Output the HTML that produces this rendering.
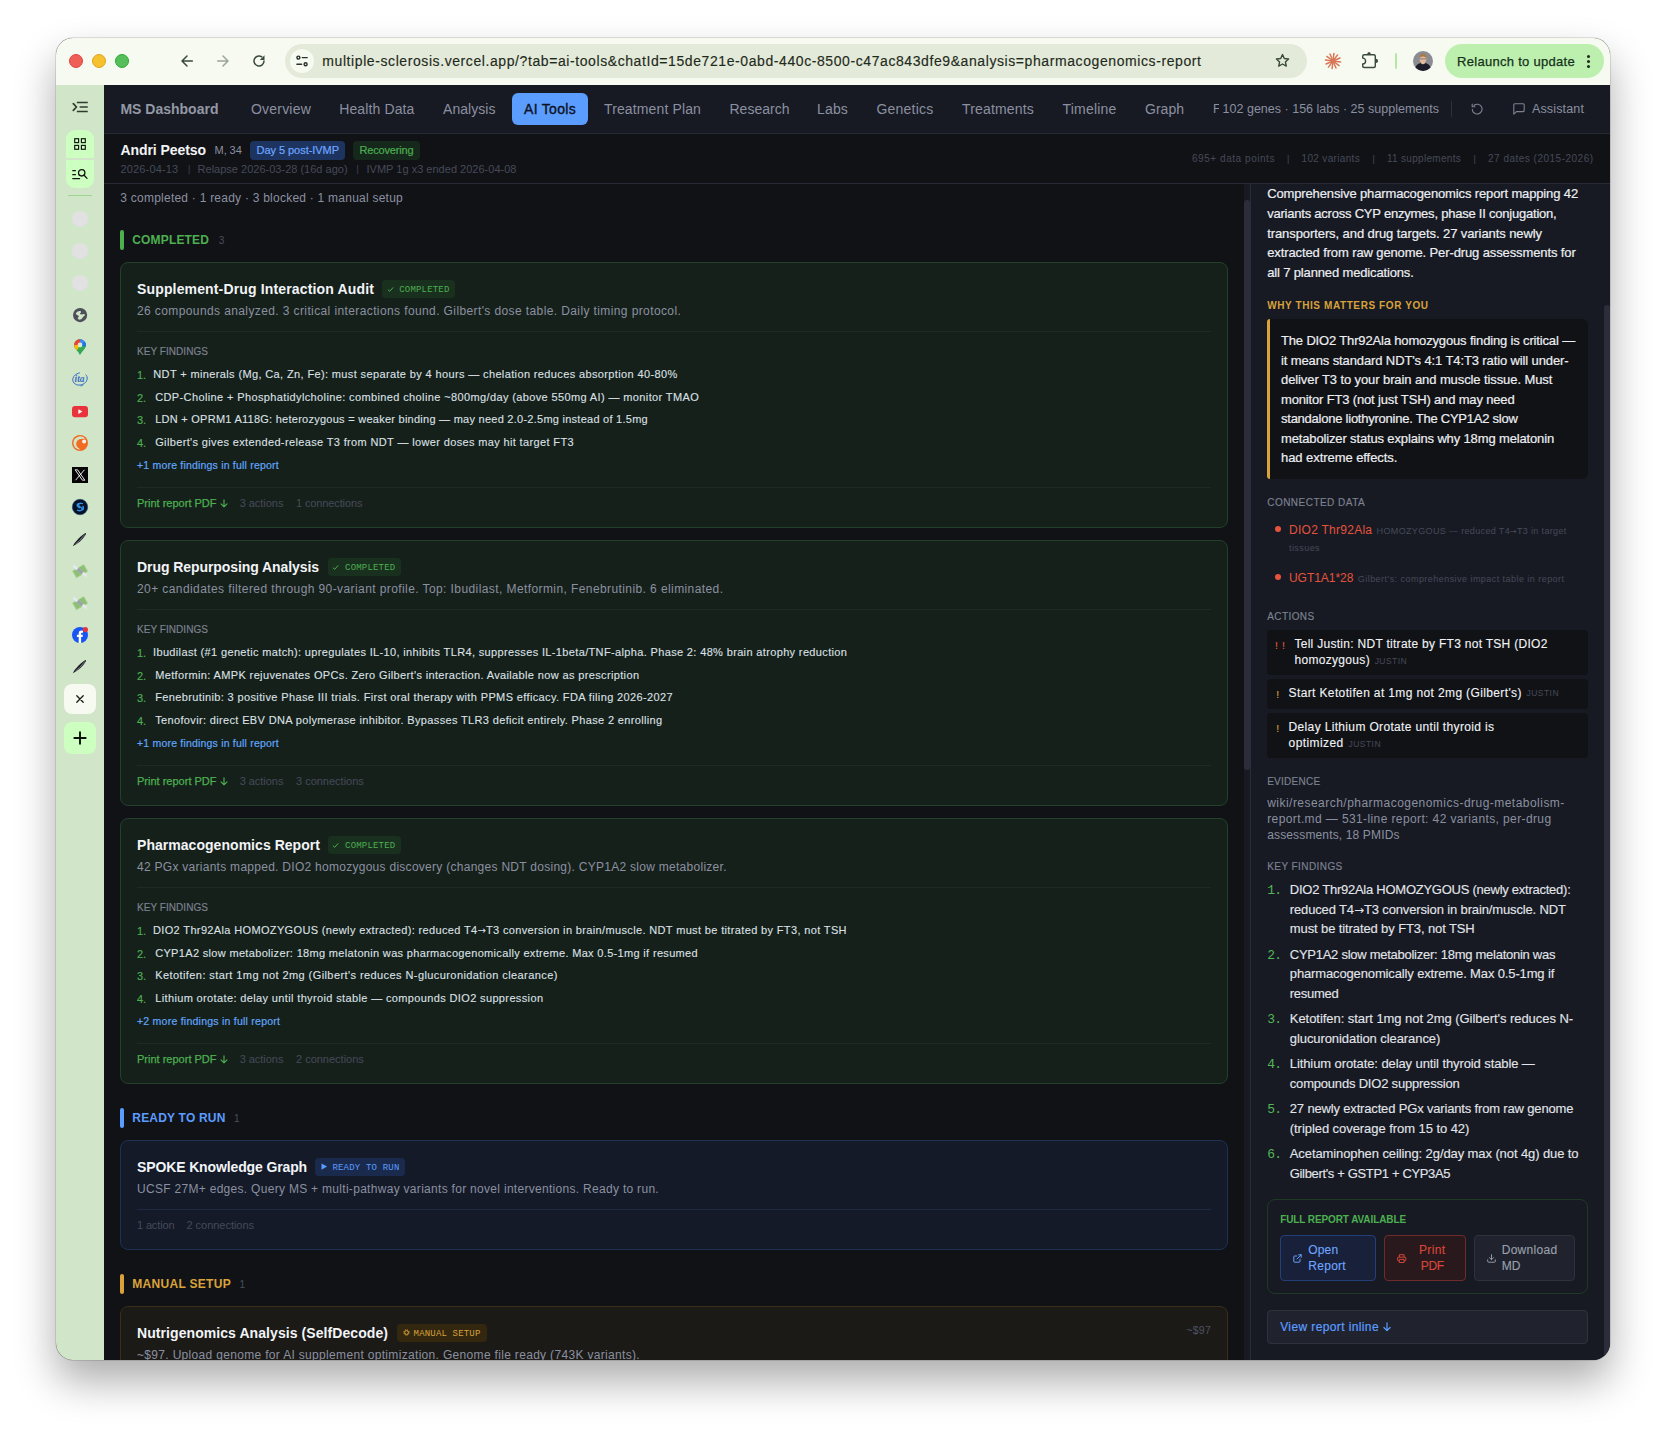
<!DOCTYPE html><html lang="en"><head><meta charset="utf-8"><title>MS Dashboard — AI Tools</title><style>

*{box-sizing:border-box;margin:0;padding:0}
html,body{width:1666px;height:1434px;overflow:hidden;background:#fff}
body{font-family:"Liberation Sans","DejaVu Sans",sans-serif;position:relative;-webkit-font-smoothing:antialiased}
.b{position:absolute}
.t{position:absolute;white-space:pre}
.m{font-family:"Liberation Mono","DejaVu Sans Mono",monospace}
.ar{font-family:"DejaVu Sans",sans-serif;font-size:.92em;line-height:0;letter-spacing:0;-webkit-text-stroke:0}
svg{position:absolute;overflow:visible}
#win{position:absolute;left:56px;top:38px;width:1554px;height:1322px;border-radius:17px;overflow:hidden;background:#111216}
#shadow{position:absolute;left:56px;top:38px;width:1554px;height:1322px;border-radius:17px;box-shadow:0 0 0 0.5px rgba(0,0,0,.22),0 21px 42px rgba(0,0,0,.33)}
#canvas{position:absolute;left:-56px;top:-38px;width:1666px;height:1434px}

</style></head><body>
<div id="shadow"></div><div id="win"><div id="canvas">
<div class="b " style="left:56px;top:38px;width:1554px;height:46.5px;background:#f7faf0;"></div>
<div class="b " style="left:69px;top:54px;width:14px;height:14px;background:#ee5f57;border:0.5px solid #e0443e;border-radius:7px;"></div>
<div class="b " style="left:92px;top:54px;width:14px;height:14px;background:#f5c22f;border:0.5px solid #dea123;border-radius:7px;"></div>
<div class="b " style="left:115px;top:54px;width:14px;height:14px;background:#56bf5b;border:0.5px solid #2bab33;border-radius:7px;"></div>
<div class="b " style="left:285px;top:44px;width:1021.6px;height:34px;background:#e3ead9;border-radius:17px;"></div>
<div class="b " style="left:290px;top:49px;width:24px;height:24px;background:#f7faf0;border-radius:12px;"></div>
<div class="b " style="left:1445px;top:44px;width:159px;height:34px;background:#bdf0ae;border-radius:17px;"></div>
<div class="b " style="left:1395px;top:53.3px;width:2px;height:15.4px;background:#b4e9a3;border-radius:1px;"></div>
<div class="b " style="left:56px;top:84.5px;width:48px;height:1275.5px;background:#d1e5c9;"></div>
<div class="b " style="left:104px;top:85px;width:1506px;height:48px;background:#171a23;"></div>
<div class="b " style="left:104px;top:133px;width:1506px;height:1px;background:#262a35;"></div>
<div class="b " style="left:104px;top:134px;width:1506px;height:49px;background:#111216;"></div>
<div class="b " style="left:104px;top:183px;width:1506px;height:1px;background:#262a35;"></div>
<div class="b " style="left:512px;top:93px;width:76px;height:32px;background:#5b9cff;border-radius:6px;"></div>
<div class="b " style="left:1451px;top:100.5px;width:1px;height:16.5px;background:#2d313d;"></div>
<div class="b " style="left:250px;top:141px;width:95px;height:19px;background:#1d3460;border-radius:4px;"></div>
<div class="b " style="left:353px;top:141px;width:67px;height:19px;background:#15281b;border-radius:4px;"></div>
<div class="b " style="left:1244px;top:184px;width:6px;height:1176px;background:#171a23;"></div>
<div class="b " style="left:1244px;top:200px;width:6px;height:570px;background:#2b2e3a;border-radius:3px;"></div>
<div class="b " style="left:120px;top:230px;width:4px;height:20px;background:#4caf50;border-radius:2px;"></div>
<div class="b " style="left:120px;top:262px;width:1108px;height:265.6px;background:#16201b;border:1px solid #22402a;border-radius:8px;"></div>
<div class="b " style="left:382px;top:280px;width:73px;height:18px;background:#1a301f;border-radius:4px;"></div>
<svg style="left:386.5px;top:285.6px" width="7" height="7" viewBox="0 0 7 7"><path d="M1.2 3.9 L2.7 5.3 L5.9 1.7" fill="none" stroke="#4caf50" stroke-width="1" stroke-linecap="round" stroke-linejoin="round"/></svg>
<div class="b " style="left:137px;top:331px;width:1074px;height:1px;background:#1d2c22;"></div>
<div class="b " style="left:137px;top:487px;width:1074px;height:1px;background:#1d2c22;"></div>
<svg style="left:219.5px;top:499.2px" width="8" height="9" viewBox="0 0 8 9"><path d="M4 0.8 V7.8 M1 4.9 L4 7.9 L7 4.9" fill="none" stroke="#4caf50" stroke-width="1.15" stroke-linecap="round" stroke-linejoin="round"/></svg>
<div class="b " style="left:120px;top:540.4px;width:1108px;height:265.20000000000005px;background:#16201b;border:1px solid #22402a;border-radius:8px;"></div>
<div class="b " style="left:327.8px;top:558.0px;width:73px;height:18px;background:#1a301f;border-radius:4px;"></div>
<svg style="left:332.3px;top:563.6px" width="7" height="7" viewBox="0 0 7 7"><path d="M1.2 3.9 L2.7 5.3 L5.9 1.7" fill="none" stroke="#4caf50" stroke-width="1" stroke-linecap="round" stroke-linejoin="round"/></svg>
<div class="b " style="left:137px;top:609.0px;width:1074px;height:1px;background:#1d2c22;"></div>
<div class="b " style="left:137px;top:765.0px;width:1074px;height:1px;background:#1d2c22;"></div>
<svg style="left:219.5px;top:777.2px" width="8" height="9" viewBox="0 0 8 9"><path d="M4 0.8 V7.8 M1 4.9 L4 7.9 L7 4.9" fill="none" stroke="#4caf50" stroke-width="1.15" stroke-linecap="round" stroke-linejoin="round"/></svg>
<div class="b " style="left:120px;top:818.3px;width:1108px;height:265.5px;background:#16201b;border:1px solid #22402a;border-radius:8px;"></div>
<div class="b " style="left:327.8px;top:836.0px;width:73px;height:18px;background:#1a301f;border-radius:4px;"></div>
<svg style="left:332.3px;top:841.6px" width="7" height="7" viewBox="0 0 7 7"><path d="M1.2 3.9 L2.7 5.3 L5.9 1.7" fill="none" stroke="#4caf50" stroke-width="1" stroke-linecap="round" stroke-linejoin="round"/></svg>
<div class="b " style="left:137px;top:887.0px;width:1074px;height:1px;background:#1d2c22;"></div>
<div class="b " style="left:137px;top:1043.0px;width:1074px;height:1px;background:#1d2c22;"></div>
<svg style="left:219.5px;top:1055.2px" width="8" height="9" viewBox="0 0 8 9"><path d="M4 0.8 V7.8 M1 4.9 L4 7.9 L7 4.9" fill="none" stroke="#4caf50" stroke-width="1.15" stroke-linecap="round" stroke-linejoin="round"/></svg>
<div class="b " style="left:120px;top:1108px;width:4px;height:20px;background:#5b9cff;border-radius:2px;"></div>
<div class="b " style="left:120px;top:1140px;width:1108px;height:109.8px;background:#141a28;border:1px solid #1d3153;border-radius:8px;"></div>
<div class="b " style="left:315px;top:1158px;width:90px;height:18px;background:#1a2a4d;border-radius:4px;"></div>
<svg style="left:321px;top:1163.4px" width="6.5" height="7.2" viewBox="0 0 6.5 7.2"><path d="M0.5 0.4 L6.1 3.6 L0.5 6.8 Z" fill="#5b9cff"/></svg>
<div class="b " style="left:137px;top:1208.8px;width:1074px;height:1px;background:#1c2a44;"></div>
<div class="b " style="left:120px;top:1274px;width:4px;height:20px;background:#d9a23b;border-radius:2px;"></div>
<div class="b " style="left:120px;top:1306px;width:1108px;height:80px;background:#1b1a17;border:1px solid #3b2e18;border-radius:8px;"></div>
<div class="b " style="left:397px;top:1323.7px;width:89.5px;height:18px;background:#33270f;border-radius:4px;"></div>
<svg style="left:402.6px;top:1329.4px" width="7" height="7" viewBox="0 0 7 7"><circle cx="3.5" cy="3.5" r="2.7" fill="none" stroke="#d9a23b" stroke-width="1" stroke-dasharray="1.1 1.02"/><circle cx="3.5" cy="3.5" r="1.9" fill="none" stroke="#d9a23b" stroke-width="1"/></svg>
<div class="b " style="left:1250px;top:184px;width:360px;height:1176px;background:#171a23;"></div>
<div class="b " style="left:1250px;top:184px;width:1px;height:1176px;background:#2a2d39;"></div>
<div class="b " style="left:1604px;top:305px;width:6px;height:1100px;background:#2b2e3a;border-radius:3px;"></div>
<div class="b " style="left:1267.2px;top:318.8px;width:320.5px;height:160.2px;background:#111216;border-radius:3px 6px 6px 3px;"></div>
<div class="b " style="left:1267.2px;top:318.8px;width:3px;height:160.2px;background:#d9a23b;border-radius:3px 0 0 3px;"></div>
<div class="b " style="left:1275px;top:526.3px;width:6px;height:6px;background:#e5533d;border-radius:3px;"></div>
<div class="b " style="left:1275px;top:574.3px;width:6px;height:6px;background:#e5533d;border-radius:3px;"></div>
<div class="b " style="left:1267.2px;top:630px;width:320.8px;height:44.8px;background:#111216;border-radius:4px;"></div>
<div class="b " style="left:1267.2px;top:679.3px;width:320.8px;height:29.5px;background:#111216;border-radius:4px;"></div>
<div class="b " style="left:1267.2px;top:713.3px;width:320.8px;height:44.5px;background:#111216;border-radius:4px;"></div>
<div class="b " style="left:1267.2px;top:1199.2px;width:320.6px;height:94.4px;border:1px solid #1e3a25;border-radius:8px;"></div>
<div class="b " style="left:1280px;top:1235.2px;width:95.8px;height:45.6px;background:#19203a;border:1px solid #233f78;border-radius:4px;"></div>
<div class="b " style="left:1384.1px;top:1235.2px;width:81.7px;height:45.6px;background:#2a191c;border:1px solid #6e2b29;border-radius:4px;"></div>
<div class="b " style="left:1474.2px;top:1235.2px;width:100.5px;height:45.6px;background:#20232d;border:1px solid #2f323d;border-radius:4px;"></div>
<div class="b " style="left:1267.2px;top:1310px;width:320.6px;height:34.2px;background:#20232d;border:1px solid #2f323d;border-radius:4px;"></div>
<svg style="left:1382.5px;top:1322.2px" width="8" height="10" viewBox="0 0 8 10"><path d="M4 0.8 V8.6 M0.9 5.5 L4 8.7 L7.1 5.5" fill="none" stroke="#5b9cff" stroke-width="1.2" stroke-linecap="round" stroke-linejoin="round"/></svg>
<svg style="left:181px;top:55px" width="12" height="12" viewBox="0 0 12 12"><path d="M11.3 6 H1.2 M6 1 L1 6 L6 11" fill="none" stroke="#3b4a3a" stroke-width="1.5" stroke-linecap="round" stroke-linejoin="round"/></svg>
<svg style="left:217px;top:55px" width="12" height="12" viewBox="0 0 12 12"><path d="M0.7 6 H10.8 M6 1 L11 6 L6 11" fill="none" stroke="#9ca59b" stroke-width="1.5" stroke-linecap="round" stroke-linejoin="round"/></svg>
<svg style="left:253px;top:55px" width="12" height="12" viewBox="0 0 12 12"><path d="M11 6 A5 5 0 1 1 8.6 1.75" fill="none" stroke="#3b4a3a" stroke-width="1.5" stroke-linecap="round"/><path d="M11.5 0.3 V5 H6.8 Z" fill="#3b4a3a"/></svg>
<svg style="left:296px;top:55px" width="12" height="12" viewBox="0 0 12 12"><g fill="none" stroke="#27332a" stroke-width="1.4" stroke-linecap="round"><circle cx="2.4" cy="2.6" r="1.5"/><path d="M6.3 2.6 H11.2"/><path d="M0.9 9.3 H5.6"/><circle cx="9.6" cy="9.3" r="1.5"/></g></svg>
<svg style="left:1275px;top:52.7px" width="15" height="15" viewBox="0 0 15 15"><path d="M7.5 1.6 L9.3 5.5 L13.6 6 L10.4 8.9 L11.3 13.1 L7.5 11 L3.7 13.1 L4.6 8.9 L1.4 6 L5.7 5.5 Z" fill="none" stroke="#3b4a3a" stroke-width="1.4" stroke-linejoin="round"/></svg>
<svg style="left:1325px;top:53px" width="16" height="16" viewBox="0 0 16 16"><g stroke="#d97757" stroke-width="1.5" stroke-linecap="round"><path d="M8 8 L15.55 8.91"/><path d="M8 8 L14.08 12.56"/><path d="M8 8 L10.98 14.99"/><path d="M8 8 L7.09 15.55"/><path d="M8 8 L3.44 14.08"/><path d="M8 8 L1.01 10.98"/><path d="M8 8 L0.45 7.09"/><path d="M8 8 L1.92 3.44"/><path d="M8 8 L5.02 1.01"/><path d="M8 8 L8.91 0.45"/><path d="M8 8 L12.56 1.92"/><path d="M8 8 L14.99 5.02"/></g></svg>
<svg style="left:1361px;top:51px" width="18" height="18" viewBox="0 0 18 18"><path d="M3.2 3.7 H12.8 Q14.3 3.7 14.3 5.2 V14.9 Q14.3 16.4 12.8 16.4 H3.2 Q1.7 16.4 1.7 14.9 V12.9 A2.9 2.9 0 0 0 1.7 7.1 V5.2 Q1.7 3.7 3.2 3.7Z" fill="none" stroke="#3b4a3a" stroke-width="1.45" stroke-linejoin="round"/><path d="M6 3.5 Q6.3 0.9 8 0.9 Q9.7 0.9 10 3.5Z M14.5 7.6 Q17.1 7.9 17.1 9.9 Q17.1 11.9 14.5 12.2Z" fill="#3b4a3a"/></svg>
<svg style="left:1413px;top:51px" width="20" height="20" viewBox="0 0 20 20"><defs><clipPath id="av"><circle cx="10" cy="10" r="10"/></clipPath></defs><g clip-path="url(#av)"><rect width="20" height="20" fill="#8a8c92"/><rect x="8.2" y="10" width="3.6" height="4" fill="#e2bb9c"/><path d="M1.6 20 Q1.8 13.4 7.6 12.1 Q10 14.6 12.4 12.1 Q18.2 13.4 18.4 20Z" fill="#1c1c2a"/><ellipse cx="10" cy="8" rx="3.3" ry="4" fill="#e6b998"/><path d="M6.5 7.9 Q6.2 2.7 10 2.7 Q13.8 2.7 13.5 7.9 Q12.8 5.4 10 5.5 Q7.2 5.4 6.5 7.9Z" fill="#a9794a"/><path d="M7.1 7.9 H12.9" stroke="#66668c" stroke-width="0.8"/></g></svg>
<div class="b " style="left:1586.5px;top:54.5px;width:3px;height:3px;background:#1d2a1c;border-radius:2px;"></div>
<div class="b " style="left:1586.5px;top:59.5px;width:3px;height:3px;background:#1d2a1c;border-radius:2px;"></div>
<div class="b " style="left:1586.5px;top:64.5px;width:3px;height:3px;background:#1d2a1c;border-radius:2px;"></div>
<svg style="left:72px;top:101px" width="16" height="12" viewBox="0 0 16 12"><g fill="none" stroke="#2f3d2f" stroke-width="1.5" stroke-linecap="square"><path d="M5.6 1.6 H15"/><path d="M8.4 6 H15"/><path d="M5.6 10.4 H15"/><path d="M1.3 2.7 L4.5 6 L1.3 9.3" stroke-width="1.7" stroke-linecap="round" stroke-linejoin="round"/></g></svg>
<div class="b " style="left:66px;top:129.8px;width:28px;height:28.2px;background:#ccffc0;border-radius:9px 9px 1px 1px;"></div>
<div class="b " style="left:66px;top:160px;width:28px;height:28px;background:#ccffc0;border-radius:1px 1px 9px 9px;"></div>
<svg style="left:74px;top:138px" width="12" height="12" viewBox="0 0 12 12"><g fill="none" stroke="#101510" stroke-width="1.15"><rect x="0.7" y="0.7" width="3.9" height="3.9"/><rect x="7.4" y="0.7" width="3.9" height="3.9"/><rect x="0.7" y="7.4" width="3.9" height="3.9"/><rect x="7.4" y="7.4" width="3.9" height="3.9"/></g></svg>
<svg style="left:72px;top:168px" width="16" height="13" viewBox="0 0 16 13"><g fill="none" stroke="#101510" stroke-width="1.3" stroke-linecap="round"><path d="M0.8 2.7 H3.4 M0.8 6.7 H3.4 M0.8 10.6 H7.6"/><circle cx="9.7" cy="4.8" r="3.2"/><path d="M12.1 7.3 L15 10.4"/></g></svg>
<div class="b " style="left:68px;top:195px;width:24px;height:1px;background:#9fd591;"></div>
<div class="b " style="left:72.3px;top:211.3px;width:15.4px;height:15.4px;background:#e1e1e1;border-radius:8px;"></div>
<div class="b " style="left:72.3px;top:243.3px;width:15.4px;height:15.4px;background:#e1e1e1;border-radius:8px;"></div>
<div class="b " style="left:72.3px;top:275.3px;width:15.4px;height:15.4px;background:#e1e1e1;border-radius:8px;"></div>
<svg style="left:72.9px;top:307.9px" width="14.2" height="14.2" viewBox="0 0 16 16"><circle cx="8" cy="8" r="8" fill="#4d5058"/><path d="M3 6.2 Q4.6 3 8 3.4 Q9.6 3.8 9 5.2 Q8 5.6 7.8 6.6 Q9.2 8 11.2 7 Q13.4 6.4 13.6 8.2 Q12.2 8.8 11 10.6 Q9.8 13 6.6 13.2 Q4.6 12 5.8 10.4 Q7.2 9.4 6.4 8.6 Q4.2 8.2 3 6.2Z" fill="#d1e5c9"/></svg>
<svg style="left:74px;top:339px" width="12" height="16" viewBox="0 0 12 16"><defs><clipPath id="pin"><path d="M6 0.2 C2.7 0.2 0.2 2.7 0.2 5.9 C0.2 9.6 4 11.6 6 15.8 C8 11.6 11.8 9.6 11.8 5.9 C11.8 2.7 9.3 0.2 6 0.2Z"/></clipPath></defs><g clip-path="url(#pin)"><rect width="12" height="16" fill="#34a853"/><path d="M0 0 H6 V6 L0 10Z" fill="#ea4335"/><path d="M6 0 H12 V6 H6Z" fill="#4285f4"/><path d="M0 6 L6 6 L2.5 12 L0 12Z" fill="#fbbc04"/><path d="M6 6 L12 4 V16 H5 Z" fill="#34a853"/><path d="M12 2 V8 L6 6Z" fill="#1a73e8"/></g><circle cx="6" cy="6" r="2.4" fill="#dbe9d4"/></svg>
<svg style="left:72px;top:371px" width="16" height="16" viewBox="0 0 16 16"><g transform="rotate(-18 8 8)"><ellipse cx="8" cy="8" rx="7.4" ry="6" fill="none" stroke="#3a6fc2" stroke-width="0.9" stroke-dasharray="33 6"/></g><path d="M8.4 15 Q10.4 14.8 11.4 13.8" fill="none" stroke="#3a6fc2" stroke-width="0.8"/><text x="2.6" y="10.9" font-family="Liberation Serif,serif" font-style="italic" font-weight="700" font-size="9.4" fill="#3a6fc2">ita</text></svg>
<svg style="left:72px;top:405.5px" width="16" height="11.2" viewBox="0 0 16 11.2"><rect width="16" height="11.2" rx="3" fill="#e8323c"/><path d="M6.4 3.2 L10.4 5.6 L6.4 8Z" fill="#fff"/></svg>
<svg style="left:72px;top:435px" width="16" height="16" viewBox="0 0 16 16"><circle cx="8" cy="8" r="8" fill="#f26b22"/><path d="M1.6 9.2 A6.6 6.6 0 0 1 13.6 4.4 A5.6 5.6 0 1 0 8.6 14.6 A6.6 6.6 0 0 1 1.6 9.2Z" fill="#d1e5c9"/><circle cx="9.1" cy="8.9" r="4.9" fill="#f26b22"/><circle cx="12.1" cy="6.4" r="2" fill="#f2f2ee"/></svg>
<svg style="left:72px;top:467px" width="16" height="16" viewBox="0 0 16 16"><rect width="16" height="16" fill="#050505"/><path d="M3.2 2.8 H5.6 L12.8 13.2 H10.4 Z" fill="none" stroke="#fff" stroke-width="0.9"/><path d="M12.4 2.8 L3.6 13.2" stroke="#fff" stroke-width="0.9"/></svg>
<svg style="left:72px;top:499px" width="16" height="16" viewBox="0 0 16 16"><circle cx="8" cy="8" r="7.7" fill="#071022" stroke="#1f4f8a" stroke-width="0.6"/><path d="M10.4 4.6 Q7 3.4 6.6 6 Q6.6 7.6 9 8.4 Q10.8 9.4 9.6 11 Q8 12.4 5.4 11.2 M7.6 4.4 Q5 4.6 5.2 6.6 Q5.6 8 7.6 8.8 M11 7.4 Q12 9.4 10.8 10.8" fill="none" stroke="#2f8fe8" stroke-width="1.4" stroke-linecap="round"/></svg>
<svg style="left:72px;top:531.9px" width="15" height="15" viewBox="0 0 15 15"><path d="M0.8 14.2 Q2.2 11 6.6 6.6 Q11 2.2 13.6 1 Q14.4 1.4 13.8 2.6 Q12 5.8 8.2 9.2 Q4 12.8 0.8 14.2Z" fill="#1b1c22"/><path d="M3.4 12.2 Q7.6 9.2 12.8 2.4" fill="none" stroke="#9aa0ad" stroke-width="0.7"/></svg>
<svg style="left:72px;top:659.1px" width="15" height="15" viewBox="0 0 15 15"><path d="M0.8 14.2 Q2.2 11 6.6 6.6 Q11 2.2 13.6 1 Q14.4 1.4 13.8 2.6 Q12 5.8 8.2 9.2 Q4 12.8 0.8 14.2Z" fill="#1b1c22"/><path d="M3.4 12.2 Q7.6 9.2 12.8 2.4" fill="none" stroke="#9aa0ad" stroke-width="0.7"/></svg>
<svg style="left:72px;top:563px" width="16" height="16" viewBox="0 0 16 16"><g transform="rotate(-30 8 8)"><rect x="1.6" y="4.4" width="12.8" height="7.6" fill="#8fbf74"/><rect x="1.6" y="4.4" width="12.8" height="7.6" fill="none" stroke="#a7d08c" stroke-width="0.8"/></g><g transform="rotate(38 8 8)"><rect x="-0.6" y="6.6" width="17.2" height="2.8" rx="1.4" fill="#e4e9ec"/><rect x="4.8" y="6.3" width="6.4" height="3.4" fill="#9aa4aa"/></g></svg>
<svg style="left:72px;top:594.6px" width="16" height="16" viewBox="0 0 16 16"><g transform="rotate(-30 8 8)"><rect x="1.6" y="4.4" width="12.8" height="7.6" fill="#8fbf74"/><rect x="1.6" y="4.4" width="12.8" height="7.6" fill="none" stroke="#a7d08c" stroke-width="0.8"/></g><g transform="rotate(38 8 8)"><rect x="-0.6" y="6.6" width="17.2" height="2.8" rx="1.4" fill="#e4e9ec"/><rect x="4.8" y="6.3" width="6.4" height="3.4" fill="#9aa4aa"/></g></svg>
<svg style="left:72px;top:627px" width="16" height="16" viewBox="0 0 16 16"><circle cx="8" cy="8" r="8" fill="#1756f2"/><path d="M6.7 16 V10 H4.9 V7.7 H6.7 V6.4 Q6.7 3.6 9.4 3.6 Q10.3 3.6 11 3.8 V5.8 H10 Q9.1 5.8 9.1 6.8 V7.7 H10.9 L10.6 10 H9.1 V16Z" fill="#fff"/><circle cx="13.4" cy="2.6" r="2.6" fill="#e8323c"/></svg>
<div class="b " style="left:64px;top:684px;width:32px;height:30px;background:#f7faf0;border-radius:8px;"></div>
<svg style="left:76px;top:695px" width="8" height="8" viewBox="0 0 8 8"><path d="M0.8 0.8 L7.2 7.2 M7.2 0.8 L0.8 7.2" stroke="#151a15" stroke-width="1.3" stroke-linecap="round"/></svg>
<div class="b " style="left:64px;top:722px;width:32px;height:32px;background:#ccffc0;border-radius:8px;"></div>
<svg style="left:73px;top:731px" width="14" height="14" viewBox="0 0 14 14"><path d="M7 0.6 V13.4 M0.6 7 H13.4" stroke="#0c100c" stroke-width="1.9"/></svg>
<svg style="left:1470.5px;top:103px" width="12" height="12" viewBox="0 0 12 12"><path d="M1.3 6.2 A4.9 4.9 0 1 0 2.9 2.5" fill="none" stroke="#7d8291" stroke-width="1.1" stroke-linecap="round"/><path d="M1.2 1 V3.8 H4" fill="none" stroke="#7d8291" stroke-width="1.1" stroke-linecap="round" stroke-linejoin="round"/></svg>
<svg style="left:1513px;top:103px" width="12" height="12" viewBox="0 0 12 12"><path d="M1.8 0.8 H10.2 Q11.2 0.8 11.2 1.8 V7.6 Q11.2 8.6 10.2 8.6 H3.4 L0.8 11.2 V1.8 Q0.8 0.8 1.8 0.8Z" fill="none" stroke="#7d8291" stroke-width="1.1" stroke-linejoin="round"/></svg>
<svg style="left:1293.3px;top:1253.6px" width="9" height="9" viewBox="0 0 9 9"><g fill="none" stroke="#6ea6ff" stroke-width="0.95" stroke-linecap="round" stroke-linejoin="round"><path d="M7 5.2 V7.4 Q7 8.2 6.2 8.2 H1.6 Q0.8 8.2 0.8 7.4 V2.8 Q0.8 2 1.6 2 H3.8"/><path d="M5.6 0.8 H8.2 V3.4 M8.2 0.8 L3.9 5.1"/></g></svg>
<svg style="left:1397px;top:1253.6px" width="9.4" height="9.2" viewBox="0 0 9.4 9.2"><g fill="none" stroke="#d8483a" stroke-width="0.95" stroke-linejoin="round"><path d="M2.3 3.2 V0.7 H7.1 V3.2"/><path d="M2.3 6.8 H1.3 Q0.6 6.8 0.6 6.1 V3.9 Q0.6 3.2 1.3 3.2 H8.1 Q8.8 3.2 8.8 3.9 V6.1 Q8.8 6.8 8.1 6.8 H7.1"/><rect x="2.3" y="5.4" width="4.8" height="3.1"/></g></svg>
<svg style="left:1487px;top:1253.6px" width="9" height="9" viewBox="0 0 9 9"><g fill="none" stroke="#9aa0ad" stroke-width="0.95" stroke-linecap="round" stroke-linejoin="round"><path d="M0.7 5.8 V7.4 Q0.7 8.2 1.5 8.2 H7.5 Q8.3 8.2 8.3 7.4 V5.8"/><path d="M4.5 0.7 V5.6 M2.4 3.6 L4.5 5.7 L6.6 3.6"/></g></svg>
<span class="t" id="t0" style="top:52.00px;font-size:14px;line-height:18px;color:#1f2a1c;left:322.30px;letter-spacing:0.585px;-webkit-text-stroke:0.15px currentColor;">multiple-sclerosis.vercel.app/?tab=ai-tools&amp;chatId=15de721e-0abd-440c-8500-c47ac843dfe9&amp;analysis=pharmacogenomics-report</span>
<span class="t" id="t1" style="top:53.01px;font-size:13px;line-height:17px;color:#14301a;left:1457.00px;letter-spacing:0.291px;-webkit-text-stroke:0.25px currentColor;">Relaunch to update</span>
<span class="t" id="t2" style="top:100.01px;font-size:14px;line-height:18px;color:#9398a6;left:120.40px;font-weight:700;letter-spacing:0.007px;">MS Dashboard</span>
<span class="t" id="t3" style="top:100.01px;font-size:14px;line-height:18px;color:#8b90a0;left:251.00px;letter-spacing:0.205px;">Overview</span>
<span class="t" id="t4" style="top:100.01px;font-size:14px;line-height:18px;color:#8b90a0;left:339.20px;letter-spacing:0.124px;">Health Data</span>
<span class="t" id="t5" style="top:100.01px;font-size:14px;line-height:18px;color:#8b90a0;left:443.00px;letter-spacing:0.057px;">Analysis</span>
<span class="t" id="t6" style="top:100.01px;font-size:14px;line-height:18px;color:#8b90a0;left:604.00px;letter-spacing:0.128px;">Treatment Plan</span>
<span class="t" id="t7" style="top:100.01px;font-size:14px;line-height:18px;color:#8b90a0;left:729.50px;letter-spacing:0.010px;">Research</span>
<span class="t" id="t8" style="top:100.01px;font-size:14px;line-height:18px;color:#8b90a0;left:817.00px;letter-spacing:0.160px;">Labs</span>
<span class="t" id="t9" style="top:100.01px;font-size:14px;line-height:18px;color:#8b90a0;left:876.50px;letter-spacing:0.219px;">Genetics</span>
<span class="t" id="t10" style="top:100.01px;font-size:14px;line-height:18px;color:#8b90a0;left:962.00px;letter-spacing:0.172px;">Treatments</span>
<span class="t" id="t11" style="top:100.01px;font-size:14px;line-height:18px;color:#8b90a0;left:1062.50px;letter-spacing:0.201px;">Timeline</span>
<span class="t" id="t12" style="top:100.01px;font-size:14px;line-height:18px;color:#8b90a0;left:1145.00px;letter-spacing:0.016px;">Graph</span>
<span class="t" id="t13" style="top:100.01px;font-size:14px;line-height:18px;color:#0c1220;left:524.00px;letter-spacing:0.307px;-webkit-text-stroke:0.35px currentColor;">AI Tools</span>
<span class="t" id="t14" style="top:101.01px;font-size:12.5px;line-height:16px;color:#8b90a0;left:1213.00px;width:5.6px;overflow:hidden;">F</span>
<span class="t" id="t15" style="top:101.01px;font-size:12.5px;line-height:16px;color:#8b90a0;left:1222.60px;letter-spacing:0.007px;">102 genes · 156 labs · 25 supplements</span>
<span class="t" id="t16" style="top:101.01px;font-size:12.5px;line-height:16px;color:#8b90a0;left:1532.00px;letter-spacing:0.142px;">Assistant</span>
<span class="t" id="t17" style="top:141.01px;font-size:14px;line-height:18px;color:#f2f4f7;left:120.40px;font-weight:700;letter-spacing:-0.063px;">Andri Peetso</span>
<span class="t" id="t18" style="top:143.00px;font-size:11px;line-height:14px;color:#8b90a0;left:214.60px;letter-spacing:-0.083px;">M, 34</span>
<span class="t" id="t19" style="top:143.00px;font-size:11px;line-height:14px;color:#6ea6ff;left:256.50px;letter-spacing:-0.043px;-webkit-text-stroke:0.2px currentColor;">Day 5 post-IVMP</span>
<span class="t" id="t20" style="top:143.00px;font-size:11px;line-height:14px;color:#4caf50;left:359.50px;letter-spacing:-0.164px;-webkit-text-stroke:0.2px currentColor;">Recovering</span>
<span class="t" id="t21" style="top:162.00px;font-size:11px;line-height:14px;color:#454a59;left:120.40px;letter-spacing:0.172px;">2026-04-13</span>
<span class="t" id="t22" style="top:164.01px;font-size:8.5px;line-height:11px;color:#454a59;left:188.00px;">|</span>
<span class="t" id="t23" style="top:162.00px;font-size:11px;line-height:14px;color:#454a59;left:197.60px;letter-spacing:0.006px;">Relapse 2026-03-28 (16d ago)</span>
<span class="t" id="t24" style="top:164.01px;font-size:8.5px;line-height:11px;color:#454a59;left:356.60px;">|</span>
<span class="t" id="t25" style="top:162.00px;font-size:11px;line-height:14px;color:#454a59;left:366.50px;letter-spacing:0.013px;">IVMP 1g x3 ended 2026-04-08</span>
<span class="t" id="t26" style="top:152.01px;font-size:10px;line-height:13px;color:#454a59;left:1192.00px;letter-spacing:0.548px;">695+ data points</span>
<span class="t" id="t27" style="top:153.00px;font-size:9px;line-height:12px;color:#454a59;left:1287.00px;">|</span>
<span class="t" id="t28" style="top:152.01px;font-size:10px;line-height:13px;color:#454a59;left:1301.50px;letter-spacing:0.335px;">102 variants</span>
<span class="t" id="t29" style="top:153.00px;font-size:9px;line-height:12px;color:#454a59;left:1372.50px;">|</span>
<span class="t" id="t30" style="top:152.01px;font-size:10px;line-height:13px;color:#454a59;left:1387.00px;letter-spacing:0.296px;">11 supplements</span>
<span class="t" id="t31" style="top:153.00px;font-size:9px;line-height:12px;color:#454a59;left:1473.50px;">|</span>
<span class="t" id="t32" style="top:152.01px;font-size:10px;line-height:13px;color:#454a59;left:1488.00px;letter-spacing:0.494px;">27 dates (2015-2026)</span>
<span class="t" id="t33" style="top:190.01px;font-size:12px;line-height:16px;color:#8b90a0;left:120.30px;letter-spacing:0.237px;">3 completed · 1 ready · 3 blocked · 1 manual setup</span>
<span class="t" id="t34" style="top:232.02px;font-size:12px;line-height:16px;color:#4caf50;left:132.30px;font-weight:700;letter-spacing:0.151px;">COMPLETED</span>
<span class="t" id="t35" style="top:234.01px;font-size:10px;line-height:13px;color:#4a4f5e;left:218.80px;">3</span>
<span class="t" id="t36" style="top:280.00px;font-size:14px;line-height:18px;color:#f2f4f7;left:137.00px;font-weight:700;letter-spacing:0.150px;">Supplement-Drug Interaction Audit</span>
<span class="t m" id="t37" style="top:284.01px;font-size:9px;line-height:12px;color:#4caf50;left:399.30px;letter-spacing:0.177px;">COMPLETED</span>
<span class="t" id="t38" style="top:303.01px;font-size:12px;line-height:16px;color:#8b90a0;left:137.00px;letter-spacing:0.391px;">26 compounds analyzed. 3 critical interactions found. Gilbert's dose table. Daily timing protocol.</span>
<span class="t" id="t39" style="top:345.00px;font-size:10px;line-height:13px;color:#7d8291;left:137.00px;letter-spacing:0.051px;-webkit-text-stroke:0.15px currentColor;">KEY FINDINGS</span>
<span class="t" id="t40" style="top:368.01px;font-size:11px;line-height:14px;color:#4caf50;left:137.00px;-webkit-text-stroke:0.15px currentColor;">1.</span>
<span class="t" id="t41" style="top:367.00px;font-size:11px;line-height:14px;color:#dde0e6;left:153.30px;letter-spacing:0.369px;-webkit-text-stroke:0.1px currentColor;">NDT + minerals (Mg, Ca, Zn, Fe): must separate by 4 hours — chelation reduces absorption 40-80%</span>
<span class="t" id="t42" style="top:391.00px;font-size:11px;line-height:14px;color:#4caf50;left:137.00px;-webkit-text-stroke:0.15px currentColor;">2.</span>
<span class="t" id="t43" style="top:390.00px;font-size:11px;line-height:14px;color:#dde0e6;left:155.20px;letter-spacing:0.377px;-webkit-text-stroke:0.1px currentColor;">CDP-Choline + Phosphatidylcholine: combined choline ~800mg/day (above 550mg AI) — monitor TMAO</span>
<span class="t" id="t44" style="top:413.01px;font-size:11px;line-height:14px;color:#4caf50;left:137.00px;-webkit-text-stroke:0.15px currentColor;">3.</span>
<span class="t" id="t45" style="top:412.01px;font-size:11px;line-height:14px;color:#dde0e6;left:155.20px;letter-spacing:0.258px;-webkit-text-stroke:0.1px currentColor;">LDN + OPRM1 A118G: heterozygous = weaker binding — may need 2.0-2.5mg instead of 1.5mg</span>
<span class="t" id="t46" style="top:436.00px;font-size:11px;line-height:14px;color:#4caf50;left:137.00px;-webkit-text-stroke:0.15px currentColor;">4.</span>
<span class="t" id="t47" style="top:435.00px;font-size:11px;line-height:14px;color:#dde0e6;left:155.20px;letter-spacing:0.359px;-webkit-text-stroke:0.1px currentColor;">Gilbert's gives extended-release T3 from NDT — lower doses may hit target FT3</span>
<span class="t" id="t48" style="top:458.00px;font-size:10.5px;line-height:14px;color:#60a5fa;left:137.00px;letter-spacing:0.197px;-webkit-text-stroke:0.2px currentColor;">+1 more findings in full report</span>
<span class="t" id="t49" style="top:496.01px;font-size:11px;line-height:14px;color:#4caf50;left:137.00px;letter-spacing:0.002px;-webkit-text-stroke:0.25px currentColor;">Print report PDF</span>
<span class="t" id="t50" style="top:496.01px;font-size:11px;line-height:14px;color:#454a59;left:239.70px;letter-spacing:-0.037px;">3 actions</span>
<span class="t" id="t51" style="top:496.01px;font-size:11px;line-height:14px;color:#454a59;left:296.00px;letter-spacing:-0.122px;">1 connections</span>
<span class="t" id="t52" style="top:558.00px;font-size:14px;line-height:18px;color:#f2f4f7;left:137.00px;font-weight:700;letter-spacing:-0.074px;">Drug Repurposing Analysis</span>
<span class="t m" id="t53" style="top:562.01px;font-size:9px;line-height:12px;color:#4caf50;left:345.10px;letter-spacing:0.177px;">COMPLETED</span>
<span class="t" id="t54" style="top:581.01px;font-size:12px;line-height:16px;color:#8b90a0;left:137.00px;letter-spacing:0.409px;">20+ candidates filtered through 90-variant profile. Top: Ibudilast, Metformin, Fenebrutinib. 6 eliminated.</span>
<span class="t" id="t55" style="top:623.01px;font-size:10px;line-height:13px;color:#7d8291;left:137.00px;letter-spacing:0.051px;-webkit-text-stroke:0.15px currentColor;">KEY FINDINGS</span>
<span class="t" id="t56" style="top:646.01px;font-size:11px;line-height:14px;color:#4caf50;left:137.00px;-webkit-text-stroke:0.15px currentColor;">1.</span>
<span class="t" id="t57" style="top:645.00px;font-size:11px;line-height:14px;color:#dde0e6;left:153.00px;letter-spacing:0.354px;-webkit-text-stroke:0.1px currentColor;">Ibudilast (#1 genetic match): upregulates IL-10, inhibits TLR4, suppresses IL-1beta/TNF-alpha. Phase 2: 48% brain atrophy reduction</span>
<span class="t" id="t58" style="top:669.00px;font-size:11px;line-height:14px;color:#4caf50;left:137.00px;-webkit-text-stroke:0.15px currentColor;">2.</span>
<span class="t" id="t59" style="top:668.00px;font-size:11px;line-height:14px;color:#dde0e6;left:155.20px;letter-spacing:0.362px;-webkit-text-stroke:0.1px currentColor;">Metformin: AMPK rejuvenates OPCs. Zero Gilbert's interaction. Available now as prescription</span>
<span class="t" id="t60" style="top:691.01px;font-size:11px;line-height:14px;color:#4caf50;left:137.00px;-webkit-text-stroke:0.15px currentColor;">3.</span>
<span class="t" id="t61" style="top:690.01px;font-size:11px;line-height:14px;color:#dde0e6;left:155.20px;letter-spacing:0.369px;-webkit-text-stroke:0.1px currentColor;">Fenebrutinib: 3 positive Phase III trials. First oral therapy with PPMS efficacy. FDA filing 2026-2027</span>
<span class="t" id="t62" style="top:714.00px;font-size:11px;line-height:14px;color:#4caf50;left:137.00px;-webkit-text-stroke:0.15px currentColor;">4.</span>
<span class="t" id="t63" style="top:713.00px;font-size:11px;line-height:14px;color:#dde0e6;left:155.20px;letter-spacing:0.349px;-webkit-text-stroke:0.1px currentColor;">Tenofovir: direct EBV DNA polymerase inhibitor. Bypasses TLR3 deficit entirely. Phase 2 enrolling</span>
<span class="t" id="t64" style="top:736.00px;font-size:10.5px;line-height:14px;color:#60a5fa;left:137.00px;letter-spacing:0.197px;-webkit-text-stroke:0.2px currentColor;">+1 more findings in full report</span>
<span class="t" id="t65" style="top:774.01px;font-size:11px;line-height:14px;color:#4caf50;left:137.00px;letter-spacing:0.002px;-webkit-text-stroke:0.25px currentColor;">Print report PDF</span>
<span class="t" id="t66" style="top:774.01px;font-size:11px;line-height:14px;color:#454a59;left:239.70px;letter-spacing:-0.037px;">3 actions</span>
<span class="t" id="t67" style="top:774.01px;font-size:11px;line-height:14px;color:#454a59;left:296.00px;letter-spacing:-0.007px;">3 connections</span>
<span class="t" id="t68" style="top:836.00px;font-size:14px;line-height:18px;color:#f2f4f7;left:137.00px;font-weight:700;letter-spacing:0.041px;">Pharmacogenomics Report</span>
<span class="t m" id="t69" style="top:840.01px;font-size:9px;line-height:12px;color:#4caf50;left:345.10px;letter-spacing:0.177px;">COMPLETED</span>
<span class="t" id="t70" style="top:859.01px;font-size:12px;line-height:16px;color:#8b90a0;left:137.00px;letter-spacing:0.275px;">42 PGx variants mapped. DIO2 homozygous discovery (changes NDT dosing). CYP1A2 slow metabolizer.</span>
<span class="t" id="t71" style="top:901.01px;font-size:10px;line-height:13px;color:#7d8291;left:137.00px;letter-spacing:0.051px;-webkit-text-stroke:0.15px currentColor;">KEY FINDINGS</span>
<span class="t" id="t72" style="top:924.01px;font-size:11px;line-height:14px;color:#4caf50;left:137.00px;-webkit-text-stroke:0.15px currentColor;">1.</span>
<span class="t" id="t73" style="top:923.00px;font-size:11px;line-height:14px;color:#dde0e6;left:153.00px;letter-spacing:0.356px;-webkit-text-stroke:0.1px currentColor;">DIO2 Thr92Ala HOMOZYGOUS (newly extracted): reduced T4<span class="ar">→</span>T3 conversion in brain/muscle. NDT must be titrated by FT3, not TSH</span>
<span class="t" id="t74" style="top:947.00px;font-size:11px;line-height:14px;color:#4caf50;left:137.00px;-webkit-text-stroke:0.15px currentColor;">2.</span>
<span class="t" id="t75" style="top:946.00px;font-size:11px;line-height:14px;color:#dde0e6;left:155.20px;letter-spacing:0.327px;-webkit-text-stroke:0.1px currentColor;">CYP1A2 slow metabolizer: 18mg melatonin was pharmacogenomically extreme. Max 0.5-1mg if resumed</span>
<span class="t" id="t76" style="top:969.01px;font-size:11px;line-height:14px;color:#4caf50;left:137.00px;-webkit-text-stroke:0.15px currentColor;">3.</span>
<span class="t" id="t77" style="top:968.01px;font-size:11px;line-height:14px;color:#dde0e6;left:155.20px;letter-spacing:0.419px;-webkit-text-stroke:0.1px currentColor;">Ketotifen: start 1mg not 2mg (Gilbert's reduces N-glucuronidation clearance)</span>
<span class="t" id="t78" style="top:992.00px;font-size:11px;line-height:14px;color:#4caf50;left:137.00px;-webkit-text-stroke:0.15px currentColor;">4.</span>
<span class="t" id="t79" style="top:991.00px;font-size:11px;line-height:14px;color:#dde0e6;left:155.20px;letter-spacing:0.364px;-webkit-text-stroke:0.1px currentColor;">Lithium orotate: delay until thyroid stable — compounds DIO2 suppression</span>
<span class="t" id="t80" style="top:1014.00px;font-size:10.5px;line-height:14px;color:#60a5fa;left:137.00px;letter-spacing:0.242px;-webkit-text-stroke:0.2px currentColor;">+2 more findings in full report</span>
<span class="t" id="t81" style="top:1052.01px;font-size:11px;line-height:14px;color:#4caf50;left:137.00px;letter-spacing:0.002px;-webkit-text-stroke:0.25px currentColor;">Print report PDF</span>
<span class="t" id="t82" style="top:1052.01px;font-size:11px;line-height:14px;color:#454a59;left:239.70px;letter-spacing:-0.037px;">3 actions</span>
<span class="t" id="t83" style="top:1052.01px;font-size:11px;line-height:14px;color:#454a59;left:296.00px;letter-spacing:-0.007px;">2 connections</span>
<span class="t" id="t84" style="top:1110.02px;font-size:12px;line-height:16px;color:#5b9cff;left:132.30px;font-weight:700;letter-spacing:0.199px;">READY TO RUN</span>
<span class="t" id="t85" style="top:1112.01px;font-size:10px;line-height:13px;color:#4a4f5e;left:234.00px;">1</span>
<span class="t" id="t86" style="top:1158.01px;font-size:14px;line-height:18px;color:#f2f4f7;left:137.00px;font-weight:700;letter-spacing:-0.129px;">SPOKE Knowledge Graph</span>
<span class="t m" id="t87" style="top:1162.01px;font-size:9px;line-height:12px;color:#5b9cff;left:332.40px;letter-spacing:0.191px;">READY TO RUN</span>
<span class="t" id="t88" style="top:1181.01px;font-size:12px;line-height:16px;color:#8b90a0;left:137.00px;letter-spacing:0.297px;">UCSF 27M+ edges. Query MS + multi-pathway variants for novel interventions. Ready to run.</span>
<span class="t" id="t89" style="top:1218.00px;font-size:11px;line-height:14px;color:#454a59;left:137.00px;letter-spacing:-0.141px;">1 action</span>
<span class="t" id="t90" style="top:1218.00px;font-size:11px;line-height:14px;color:#454a59;left:186.50px;letter-spacing:-0.030px;">2 connections</span>
<span class="t" id="t91" style="top:1276.02px;font-size:12px;line-height:16px;color:#d9a23b;left:132.30px;font-weight:700;letter-spacing:0.298px;">MANUAL SETUP</span>
<span class="t" id="t92" style="top:1278.01px;font-size:10px;line-height:13px;color:#4a4f5e;left:239.50px;">1</span>
<span class="t" id="t93" style="top:1324.00px;font-size:14px;line-height:18px;color:#f2f4f7;left:137.00px;font-weight:700;letter-spacing:0.073px;">Nutrigenomics Analysis (SelfDecode)</span>
<span class="t m" id="t94" style="top:1328.02px;font-size:9px;line-height:12px;color:#d9a23b;left:413.60px;letter-spacing:0.174px;">MANUAL SETUP</span>
<span class="t" id="t95" style="top:1323.01px;font-size:10.5px;line-height:14px;color:#4d5261;left:1186.30px;letter-spacing:0.261px;">~$97</span>
<span class="t" id="t96" style="top:1347.01px;font-size:12px;line-height:16px;color:#8b90a0;left:137.00px;letter-spacing:0.322px;">~$97. Upload genome for AI supplement optimization. Genome file ready (743K variants).</span>
<span class="t" id="t97" style="top:185.00px;font-size:13px;line-height:17px;color:#eceef2;left:1267.20px;letter-spacing:-0.134px;-webkit-text-stroke:0.2px currentColor;">Comprehensive pharmacogenomics report mapping 42</span>
<span class="t" id="t98" style="top:205.01px;font-size:13px;line-height:17px;color:#eceef2;left:1267.20px;letter-spacing:-0.221px;-webkit-text-stroke:0.2px currentColor;">variants across CYP enzymes, phase II conjugation,</span>
<span class="t" id="t99" style="top:225.01px;font-size:13px;line-height:17px;color:#eceef2;left:1267.20px;letter-spacing:-0.084px;-webkit-text-stroke:0.2px currentColor;">transporters, and drug targets. 27 variants newly</span>
<span class="t" id="t100" style="top:244.01px;font-size:13px;line-height:17px;color:#eceef2;left:1267.20px;letter-spacing:-0.114px;-webkit-text-stroke:0.2px currentColor;">extracted from raw genome. Per-drug assessments for</span>
<span class="t" id="t101" style="top:264.01px;font-size:13px;line-height:17px;color:#eceef2;left:1267.20px;letter-spacing:-0.147px;-webkit-text-stroke:0.2px currentColor;">all 7 planned medications.</span>
<span class="t" id="t102" style="top:299.01px;font-size:10px;line-height:13px;color:#d9a23b;left:1267.20px;font-weight:700;letter-spacing:0.590px;">WHY THIS MATTERS FOR YOU</span>
<span class="t" id="t103" style="top:332.01px;font-size:13px;line-height:17px;color:#eceef2;left:1281.00px;letter-spacing:-0.156px;-webkit-text-stroke:0.2px currentColor;">The DIO2 Thr92Ala homozygous finding is critical —</span>
<span class="t" id="t104" style="top:352.01px;font-size:13px;line-height:17px;color:#eceef2;left:1281.00px;letter-spacing:-0.116px;-webkit-text-stroke:0.2px currentColor;">it means standard NDT's 4:1 T4:T3 ratio will under-</span>
<span class="t" id="t105" style="top:371.01px;font-size:13px;line-height:17px;color:#eceef2;left:1281.00px;letter-spacing:-0.095px;-webkit-text-stroke:0.2px currentColor;">deliver T3 to your brain and muscle tissue. Must</span>
<span class="t" id="t106" style="top:391.01px;font-size:13px;line-height:17px;color:#eceef2;left:1281.00px;letter-spacing:-0.157px;-webkit-text-stroke:0.2px currentColor;">monitor FT3 (not just TSH) and may need</span>
<span class="t" id="t107" style="top:410.01px;font-size:13px;line-height:17px;color:#eceef2;left:1281.00px;letter-spacing:-0.240px;-webkit-text-stroke:0.2px currentColor;">standalone liothyronine. The CYP1A2 slow</span>
<span class="t" id="t108" style="top:430.01px;font-size:13px;line-height:17px;color:#eceef2;left:1281.00px;letter-spacing:-0.144px;-webkit-text-stroke:0.2px currentColor;">metabolizer status explains why 18mg melatonin</span>
<span class="t" id="t109" style="top:449.01px;font-size:13px;line-height:17px;color:#eceef2;left:1281.00px;letter-spacing:-0.062px;-webkit-text-stroke:0.2px currentColor;">had extreme effects.</span>
<span class="t" id="t110" style="top:496.00px;font-size:10px;line-height:13px;color:#7d8291;left:1267.20px;letter-spacing:0.478px;-webkit-text-stroke:0.15px currentColor;">CONNECTED DATA</span>
<span class="t" id="t111" style="top:522.01px;font-size:12px;line-height:16px;color:#e5533d;left:1289.00px;letter-spacing:0.267px;">DIO2 Thr92Ala</span>
<span class="t" id="t112" style="top:525.01px;font-size:9px;line-height:12px;color:#454a59;left:1376.60px;letter-spacing:0.349px;">HOMOZYGOUS — reduced T4<span class="ar">→</span>T3 in target</span>
<span class="t" id="t113" style="top:542.01px;font-size:9px;line-height:12px;color:#454a59;left:1289.00px;letter-spacing:0.426px;">tissues</span>
<span class="t" id="t114" style="top:570.01px;font-size:12px;line-height:16px;color:#e5533d;left:1289.00px;letter-spacing:-0.045px;">UGT1A1*28</span>
<span class="t" id="t115" style="top:573.01px;font-size:9px;line-height:12px;color:#454a59;left:1357.80px;letter-spacing:0.455px;">Gilbert's: comprehensive impact table in report</span>
<span class="t" id="t116" style="top:610.02px;font-size:10px;line-height:13px;color:#7d8291;left:1267.20px;letter-spacing:0.421px;-webkit-text-stroke:0.15px currentColor;">ACTIONS</span>
<span class="t m" id="t117" style="top:638.01px;font-size:11.5px;line-height:15px;color:#e5533d;left:1273.10px;">!!</span>
<span class="t" id="t118" style="top:636.02px;font-size:12px;line-height:16px;color:#f0f2f5;left:1294.40px;letter-spacing:0.287px;-webkit-text-stroke:0.12px currentColor;">Tell Justin: NDT titrate by FT3 not TSH (DIO2</span>
<span class="t" id="t119" style="top:652.00px;font-size:12px;line-height:16px;color:#f0f2f5;left:1294.40px;letter-spacing:0.323px;-webkit-text-stroke:0.12px currentColor;">homozygous)</span>
<span class="t" id="t120" style="top:656.00px;font-size:8.5px;line-height:11px;color:#454a59;left:1374.70px;letter-spacing:0.425px;">JUSTIN</span>
<span class="t m" id="t121" style="top:687.01px;font-size:11.5px;line-height:15px;color:#d9a23b;left:1274.20px;">!</span>
<span class="t" id="t122" style="top:685.01px;font-size:12px;line-height:16px;color:#f0f2f5;left:1288.60px;letter-spacing:0.369px;-webkit-text-stroke:0.12px currentColor;">Start Ketotifen at 1mg not 2mg (Gilbert's)</span>
<span class="t" id="t123" style="top:688.01px;font-size:8.5px;line-height:11px;color:#454a59;left:1526.60px;letter-spacing:0.442px;">JUSTIN</span>
<span class="t m" id="t124" style="top:721.00px;font-size:11.5px;line-height:15px;color:#d9a23b;left:1274.20px;">!</span>
<span class="t" id="t125" style="top:719.02px;font-size:12px;line-height:16px;color:#f0f2f5;left:1288.60px;letter-spacing:0.341px;-webkit-text-stroke:0.12px currentColor;">Delay Lithium Orotate until thyroid is</span>
<span class="t" id="t126" style="top:735.01px;font-size:12px;line-height:16px;color:#f0f2f5;left:1288.60px;letter-spacing:0.416px;-webkit-text-stroke:0.12px currentColor;">optimized</span>
<span class="t" id="t127" style="top:739.01px;font-size:8.5px;line-height:11px;color:#454a59;left:1348.50px;letter-spacing:0.458px;">JUSTIN</span>
<span class="t" id="t128" style="top:775.00px;font-size:10px;line-height:13px;color:#7d8291;left:1267.20px;letter-spacing:0.259px;-webkit-text-stroke:0.15px currentColor;">EVIDENCE</span>
<span class="t" id="t129" style="top:795.01px;font-size:12px;line-height:16px;color:#8b90a0;left:1267.20px;letter-spacing:0.472px;">wiki/research/pharmacogenomics-drug-metabolism-</span>
<span class="t" id="t130" style="top:811.01px;font-size:12px;line-height:16px;color:#8b90a0;left:1267.20px;letter-spacing:0.390px;">report.md — 531-line report: 42 variants, per-drug</span>
<span class="t" id="t131" style="top:827.02px;font-size:12px;line-height:16px;color:#8b90a0;left:1267.20px;letter-spacing:0.144px;">assessments, 18 PMIDs</span>
<span class="t" id="t132" style="top:860.01px;font-size:10px;line-height:13px;color:#7d8291;left:1267.20px;letter-spacing:0.426px;-webkit-text-stroke:0.15px currentColor;">KEY FINDINGS</span>
<span class="t m" id="t133" style="top:882.01px;font-size:13px;line-height:17px;color:#52b656;left:1267.20px;letter-spacing:-0.805px;">1.</span>
<span class="t" id="t134" style="top:881.00px;font-size:13px;line-height:17px;color:#e2e5ea;left:1289.80px;letter-spacing:-0.254px;-webkit-text-stroke:0.12px currentColor;">DIO2 Thr92Ala HOMOZYGOUS (newly extracted):</span>
<span class="t" id="t135" style="top:901.01px;font-size:13px;line-height:17px;color:#e2e5ea;left:1289.80px;letter-spacing:-0.140px;-webkit-text-stroke:0.12px currentColor;">reduced T4<span class="ar">→</span>T3 conversion in brain/muscle. NDT</span>
<span class="t" id="t136" style="top:920.00px;font-size:13px;line-height:17px;color:#e2e5ea;left:1289.80px;letter-spacing:-0.111px;-webkit-text-stroke:0.12px currentColor;">must be titrated by FT3, not TSH</span>
<span class="t m" id="t137" style="top:947.00px;font-size:13px;line-height:17px;color:#52b656;left:1267.20px;letter-spacing:-0.805px;">2.</span>
<span class="t" id="t138" style="top:946.01px;font-size:13px;line-height:17px;color:#e2e5ea;left:1289.80px;letter-spacing:-0.264px;-webkit-text-stroke:0.12px currentColor;">CYP1A2 slow metabolizer: 18mg melatonin was</span>
<span class="t" id="t139" style="top:965.00px;font-size:13px;line-height:17px;color:#e2e5ea;left:1289.80px;letter-spacing:-0.136px;-webkit-text-stroke:0.12px currentColor;">pharmacogenomically extreme. Max 0.5-1mg if</span>
<span class="t" id="t140" style="top:985.01px;font-size:13px;line-height:17px;color:#e2e5ea;left:1289.80px;letter-spacing:-0.268px;-webkit-text-stroke:0.12px currentColor;">resumed</span>
<span class="t m" id="t141" style="top:1011.01px;font-size:13px;line-height:17px;color:#52b656;left:1267.20px;letter-spacing:-0.805px;">3.</span>
<span class="t" id="t142" style="top:1010.00px;font-size:13px;line-height:17px;color:#e2e5ea;left:1289.80px;letter-spacing:-0.050px;-webkit-text-stroke:0.12px currentColor;">Ketotifen: start 1mg not 2mg (Gilbert's reduces N-</span>
<span class="t" id="t143" style="top:1030.01px;font-size:13px;line-height:17px;color:#e2e5ea;left:1289.80px;letter-spacing:-0.080px;-webkit-text-stroke:0.12px currentColor;">glucuronidation clearance)</span>
<span class="t m" id="t144" style="top:1056.00px;font-size:13px;line-height:17px;color:#52b656;left:1267.20px;letter-spacing:-0.805px;">4.</span>
<span class="t" id="t145" style="top:1055.00px;font-size:13px;line-height:17px;color:#e2e5ea;left:1289.80px;letter-spacing:-0.096px;-webkit-text-stroke:0.12px currentColor;">Lithium orotate: delay until thyroid stable —</span>
<span class="t" id="t146" style="top:1075.00px;font-size:13px;line-height:17px;color:#e2e5ea;left:1289.80px;letter-spacing:-0.199px;-webkit-text-stroke:0.12px currentColor;">compounds DIO2 suppression</span>
<span class="t m" id="t147" style="top:1101.00px;font-size:13px;line-height:17px;color:#52b656;left:1267.20px;letter-spacing:-0.805px;">5.</span>
<span class="t" id="t148" style="top:1100.00px;font-size:13px;line-height:17px;color:#e2e5ea;left:1289.80px;letter-spacing:-0.164px;-webkit-text-stroke:0.12px currentColor;">27 newly extracted PGx variants from raw genome</span>
<span class="t" id="t149" style="top:1120.00px;font-size:13px;line-height:17px;color:#e2e5ea;left:1289.80px;letter-spacing:-0.059px;-webkit-text-stroke:0.12px currentColor;">(tripled coverage from 15 to 42)</span>
<span class="t m" id="t150" style="top:1146.00px;font-size:13px;line-height:17px;color:#52b656;left:1267.20px;letter-spacing:-0.805px;">6.</span>
<span class="t" id="t151" style="top:1145.00px;font-size:13px;line-height:17px;color:#e2e5ea;left:1289.80px;letter-spacing:-0.096px;-webkit-text-stroke:0.12px currentColor;">Acetaminophen ceiling: 2g/day max (not 4g) due to</span>
<span class="t" id="t152" style="top:1165.00px;font-size:13px;line-height:17px;color:#e2e5ea;left:1289.80px;letter-spacing:-0.346px;-webkit-text-stroke:0.12px currentColor;">Gilbert's + GSTP1 + CYP3A5</span>
<span class="t" id="t153" style="top:1213.00px;font-size:10px;line-height:13px;color:#4caf50;left:1280.20px;font-weight:700;letter-spacing:-0.103px;">FULL REPORT AVAILABLE</span>
<span class="t" id="t154" style="top:1242.01px;font-size:12px;line-height:16px;color:#6ea6ff;left:1308.30px;letter-spacing:0.160px;-webkit-text-stroke:0.12px currentColor;">Open</span>
<span class="t" id="t155" style="top:1258.01px;font-size:12px;line-height:16px;color:#6ea6ff;left:1308.30px;letter-spacing:0.278px;-webkit-text-stroke:0.12px currentColor;">Report</span>
<span class="t" id="t156" style="top:1242.01px;font-size:12px;line-height:16px;color:#d8483a;left:1419.00px;letter-spacing:0.343px;-webkit-text-stroke:0.12px currentColor;">Print</span>
<span class="t" id="t157" style="top:1258.01px;font-size:12px;line-height:16px;color:#d8483a;left:1420.80px;letter-spacing:-0.333px;-webkit-text-stroke:0.12px currentColor;">PDF</span>
<span class="t" id="t158" style="top:1242.01px;font-size:12px;line-height:16px;color:#9aa0ad;left:1501.70px;letter-spacing:0.291px;-webkit-text-stroke:0.12px currentColor;">Download</span>
<span class="t" id="t159" style="top:1258.01px;font-size:12px;line-height:16px;color:#9aa0ad;left:1501.70px;letter-spacing:0.064px;-webkit-text-stroke:0.12px currentColor;">MD</span>
<span class="t" id="t160" style="top:1319.02px;font-size:12px;line-height:16px;color:#5b9cff;left:1280.20px;letter-spacing:0.387px;-webkit-text-stroke:0.2px currentColor;">View report inline</span>
</div></div></body></html>
